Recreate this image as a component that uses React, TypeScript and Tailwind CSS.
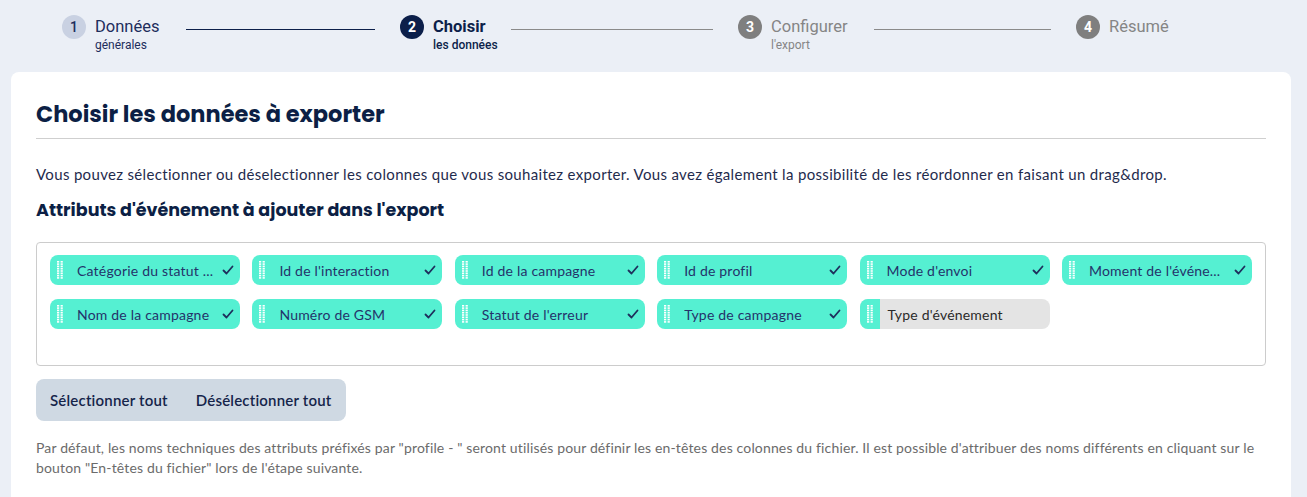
import React from "react";

const steps = [
  { n: 1, title: "Données", sub: "générales", state: "done", w: "w-[91px]" },
  { n: 2, title: "Choisir", sub: "les données", state: "active", w: "w-[78px]" },
  { n: 3, title: "Configurer", sub: "l'export", state: "todo", w: "w-[103px]" },
  { n: 4, title: "Résumé", sub: "", state: "todo", w: "w-auto" },
];

const attributes = [
  { label: "Catégorie du statut ...", on: true },
  { label: "Id de l'interaction", on: true },
  { label: "Id de la campagne", on: true },
  { label: "Id de profil", on: true },
  { label: "Mode d'envoi", on: true },
  { label: "Moment de l'événe...", on: true },
  { label: "Nom de la campagne", on: true },
  { label: "Numéro de GSM", on: true },
  { label: "Statut de l'erreur", on: true },
  { label: "Type de campagne", on: true },
  { label: "Type d'événement", on: false },
];

function Grip() {
  return (
    <svg width="6" height="18" viewBox="0 0 6 18" className="shrink-0">
      {[0, 1, 2, 3, 4, 5, 6, 7].map((i) => (
        <g key={i}>
          <rect x="0" y={i * 2.3} width="2.2" height="1.6" fill="white" />
          <rect x="3.6" y={i * 2.3} width="2.2" height="1.6" fill="white" />
        </g>
      ))}
    </svg>
  );
}

function Check() {
  return (
    <svg width="12" height="12" viewBox="0 0 12 12" className="shrink-0">
      <path d="M1.5 6.5 L4.5 9.5 L10.5 2.5" fill="none" stroke="#1e2f5c" strokeWidth="1.8" strokeLinecap="round" strokeLinejoin="round" />
    </svg>
  );
}

function Chip({ label, on }: { label: string; on: boolean }) {
  if (!on) {
    return (
      <div className="flex h-[30px] w-[190px] items-center overflow-hidden rounded-lg bg-[#e4e4e4]">
        <div className="flex h-full w-[20px] items-center justify-center bg-[#55f0d2]">
          <Grip />
        </div>
        <span className="pl-[8px] text-[14px] tracking-[0.2px] text-[#2a2a2a]">{label}</span>
      </div>
    );
  }
  return (
    <div className="flex h-[30px] w-[190px] items-center rounded-lg bg-[#55f0d2] pl-[7px] pr-[6px]">
      <Grip />
      <span className="ml-[14px] flex-1 truncate text-[14px] tracking-[0.2px] text-[#24336a]">{label}</span>
      <Check />
    </div>
  );
}

export default function App() {
  return (
    <div className="min-h-screen bg-[#ebeff6] font-['Lato',sans-serif]">
      {/* Stepper */}
      <div className="flex h-[72px] items-start pl-[62px] pt-[15px] font-['Roboto',sans-serif]">
        {steps.map((s, i) => (
          <div key={s.n} className={i < steps.length - 1 ? "flex w-[338px] shrink-0 items-start" : "flex items-start"}>
            <div
              className={
                s.state === "done"
                  ? "flex h-[24px] w-[24px] shrink-0 items-center justify-center rounded-full bg-[#c9d1e2] text-[14px] font-medium text-[#1d2d5c]"
                  : s.state === "active"
                    ? "flex h-[24px] w-[24px] shrink-0 items-center justify-center rounded-full bg-[#0c1f4a] text-[14px] font-bold text-white"
                    : "flex h-[24px] w-[24px] shrink-0 items-center justify-center rounded-full bg-[#7f7f7f] text-[14px] font-bold text-white"
              }
            >
              {s.n}
            </div>
            <div className={`ml-[9px] flex shrink-0 flex-col pt-px ${s.w}`}>
              <span
                className={
                  s.state === "done"
                    ? "text-[16.5px] leading-[22px] text-[#1d2d5c]"
                    : s.state === "active"
                      ? "text-[16.5px] font-bold leading-[22px] text-[#0c1f4a]"
                      : "text-[16.5px] leading-[22px] text-[#858585]"
                }
              >
                {s.title}
              </span>
              {s.sub && (
                <span
                  className={
                    s.state === "done"
                      ? "text-[12px] leading-[14px] text-[#1d2d5c]"
                      : s.state === "active"
                        ? "text-[12px] font-medium leading-[14px] text-[#0c1f4a]"
                        : "text-[12px] leading-[14px] text-[#858585]"
                  }
                >
                  {s.sub}
                </span>
              )}
            </div>
            {i < steps.length - 1 && (
              <div
                className={
                  i === 0
                    ? "mr-[25px] mt-[14px] h-px flex-1 bg-[#0c1f4a]"
                    : "mr-[25px] mt-[14px] h-px flex-1 bg-[#8a8a8a]"
                }
              />
            )}
          </div>
        ))}
      </div>

      {/* Card */}
      <div className="mx-[11px] mr-[16px] rounded-lg bg-white px-[25px] pb-[40px] pt-[26px]">
        <h1 className="font-['Poppins','Inter',sans-serif] text-[22.5px] font-bold leading-[32px] text-[#0c1f45]">
          Choisir les données à exporter
        </h1>
        <div className="mt-[8px] h-px bg-[#cfcfcf]" />
        <p className="mt-[24px] text-[15px] leading-[22px] tracking-[0.33px] text-[#1f2b4d]">
          Vous pouvez sélectionner ou déselectionner les colonnes que vous souhaitez exporter. Vous avez également la possibilité de les réordonner en faisant un drag&amp;drop.
        </p>
        <h2 className="mt-[12px] font-['Poppins','Inter',sans-serif] text-[17.5px] font-bold leading-[26px] text-[#0c1f45]">
          Attributs d'événement à ajouter dans l'export
        </h2>
        <div className="mt-[19px] h-[124px] rounded border border-[#cccccc] px-[13px] pt-[12px]">
          <div className="flex flex-wrap gap-x-[12.4px] gap-y-[14px]">
            {attributes.map((a) => (
              <Chip key={a.label} label={a.label} on={a.on} />
            ))}
          </div>
        </div>
        <div className="mt-[13px] inline-flex h-[42px] items-center gap-[28px] rounded-lg bg-[#cfd9e3] px-[14px] text-[15px] font-semibold tracking-[0.2px] text-[#15244a]">
          <button>Sélectionner tout</button>
          <button>Désélectionner tout</button>
        </div>
        <p className="mt-[17px] text-[14px] leading-[20px] tracking-[0.15px] text-[#6b6b6b]">
          Par défaut, les noms techniques des attributs préfixés par "profile - " seront utilisés pour définir les en-têtes des colonnes du fichier. Il est possible d'attribuer des noms différents en cliquant sur le bouton "En-têtes du fichier" lors de l'étape suivante.
        </p>
      </div>
    </div>
  );
}
